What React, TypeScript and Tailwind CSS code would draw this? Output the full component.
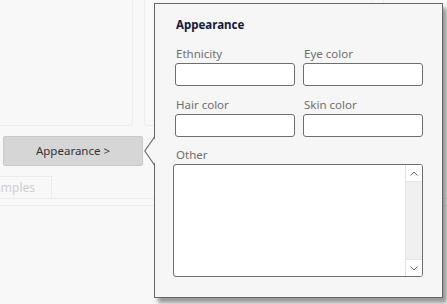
import React from "react";

function Field({ label, className = "" }: { label: string; className?: string }) {
  return (
    <div className={className}>
      <div className="h-[16px] leading-[16px] text-[11.5px] text-[#6f6f6f] pl-[1px]">{label}</div>
      <div className="mt-[1px] h-[23px] w-[120px] bg-white border border-[#6e6e6e] rounded-[3px]" />
    </div>
  );
}

export default function App() {
  return (
    <div className="relative w-[447px] h-[304px] overflow-hidden bg-[#f8f8f8] font-['Noto_Sans',sans-serif]">
      {/* background layer */}
      <div className="flex h-[126px]">
        <div className="w-[133px] h-[126px] border-r border-b border-[#ededed] rounded-br-[4px]" />
        <div className="ml-[11px] w-[229px] h-[126px] border-l border-r border-b border-[#ededed] rounded-b-[4px]" />
        <div className="ml-[10px] flex-1 h-[126px] border-l border-[#ededed]" />
      </div>
      <div className="mt-[10px] pl-[3px]">
        <button className="w-[140px] h-[30px] bg-[#d6d6d6] border border-[#c9c9c9] rounded-[2px] text-[11.5px] text-[#333] leading-[28px] font-['Noto_Sans',sans-serif]">
          Appearance &gt;
        </button>
      </div>
      <div className="mt-[10px] h-[23px] flex border-b border-[#ececec]">
        <div className="w-[52px] h-[23px] flex justify-end items-center pr-[16px] overflow-hidden border-r border-t border-[#ececec] whitespace-nowrap text-[12px] text-[#cfcfcf]">
          Examples
        </div>
      </div>
      <div className="mt-[6px] border-b border-[#ececec]" />

      {/* popover */}
      <div className="absolute left-[154px] top-[3px] w-[289px] h-[295px] bg-[#f6f6f6] border border-[#666666] shadow-[4px_5px_4px_rgba(0,0,0,0.38)] pl-[20px] pr-[17px] pt-[13px]">
        <svg className="absolute left-[-11px] top-[133px]" width="12" height="28" viewBox="0 0 12 28">
          <polygon points="12,0 0.8,14 12,28" fill="#f6f6f6" />
          <polyline points="10.5,0 0.8,14 10.5,28" fill="none" stroke="#666666" strokeWidth="1.1" />
        </svg>
        <div className="h-[16px] leading-[16px] text-[11.5px] font-bold text-[#141a3a] pl-[1px]">Appearance</div>
        <div className="mt-[13px] grid grid-cols-[120px_120px] gap-x-[8px]">
          <Field label="Ethnicity" />
          <Field label="Eye color" />
          <Field label="Hair color" className="mt-[11px]" />
          <Field label="Skin color" className="mt-[11px]" />
        </div>
        <div className="mt-[10px]">
          <div className="h-[16px] leading-[16px] text-[11.5px] text-[#6f6f6f] pl-[1px]">Other</div>
          <div className="mt-[1px] -ml-[2px] w-[250px] h-[113px] bg-white border border-[#6e6e6e] rounded-[3px] flex justify-end overflow-hidden">
            <div className="w-[17px] h-full border-l border-[#e2e2e2] flex flex-col">
              <div className="h-[17px] border-b border-[#e6e6e6] bg-white flex items-center justify-center">
                <svg width="8" height="5" viewBox="0 0 8 5">
                  <polyline points="0.5,4.5 4,1 7.5,4.5" fill="none" stroke="#6a6a6a" strokeWidth="1" />
                </svg>
              </div>
              <div className="flex-1 bg-[#f0f0f0]" />
              <div className="h-[17px] border-t border-[#e6e6e6] bg-white flex items-center justify-center">
                <svg width="8" height="5" viewBox="0 0 8 5">
                  <polyline points="0.5,0.5 4,4 7.5,0.5" fill="none" stroke="#6a6a6a" strokeWidth="1" />
                </svg>
              </div>
            </div>
          </div>
        </div>
      </div>
    </div>
  );
}
